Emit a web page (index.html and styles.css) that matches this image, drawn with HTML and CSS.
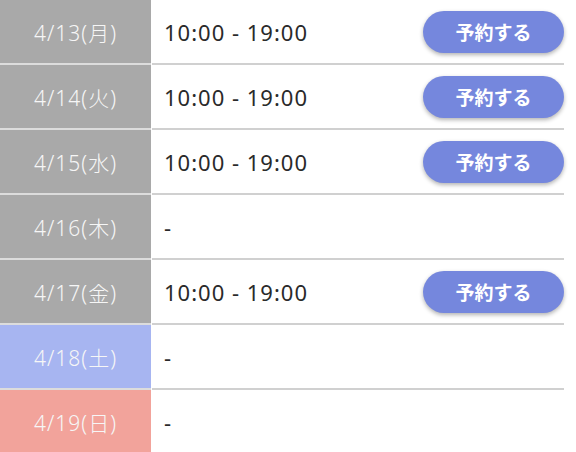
FILE: index.html
```html
<!DOCTYPE html>
<html lang="ja">
<head>
<meta charset="utf-8">
<link rel="stylesheet" href="styles.css">
</head>
<body>
<div class="schedule">
  <div class="row">
    <div class="date weekday">4/13(月)</div>
    <div class="slot"><span class="time">10:00 - 19:00</span><button class="reserve">予約する</button></div>
  </div>
  <div class="row">
    <div class="date weekday">4/14(火)</div>
    <div class="slot"><span class="time">10:00 - 19:00</span><button class="reserve">予約する</button></div>
  </div>
  <div class="row">
    <div class="date weekday">4/15(水)</div>
    <div class="slot"><span class="time">10:00 - 19:00</span><button class="reserve">予約する</button></div>
  </div>
  <div class="row">
    <div class="date weekday">4/16(木)</div>
    <div class="slot"><span class="time">-</span></div>
  </div>
  <div class="row">
    <div class="date weekday">4/17(金)</div>
    <div class="slot"><span class="time">10:00 - 19:00</span><button class="reserve">予約する</button></div>
  </div>
  <div class="row">
    <div class="date saturday">4/18(土)</div>
    <div class="slot"><span class="time">-</span></div>
  </div>
  <div class="row">
    <div class="date sunday">4/19(日)</div>
    <div class="slot"><span class="time">-</span></div>
  </div>
</div>
</body>
</html>
```

FILE: styles.css
```css
html, body {
  margin: 0;
  padding: 0;
  background: #fff;
  overflow: hidden;
}
body {
  width: 576px;
  height: 452px;
  font-family: "Noto Sans", "Noto Sans CJK JP", sans-serif;
}
.schedule {
  width: 564px;
  display: flex;
  flex-direction: column;
}
.row {
  display: grid;
  grid-template-columns: 151px 1fr;
  column-gap: 1px;
  height: 65px;
}
.date {
  display: flex;
  align-items: center;
  justify-content: center;
  color: #f6f6f6;
  font-size: 21px;
  font-weight: 300;
  letter-spacing: 1px;
  border-bottom: 2px solid #dcdcdc;
}
.weekday { background: #a9a9a9; }
.saturday { background: #a7b5f1; }
.sunday { background: #f2a39b; }
.slot {
  display: flex;
  align-items: center;
  justify-content: space-between;
  padding-left: 12px;
  border-bottom: 2px solid #d0d0d0;
}
.time {
  font-size: 22px;
  letter-spacing: 1px;
  color: #2a2a2a;
}
.reserve {
  width: 141px;
  height: 42px;
  border: none;
  border-radius: 21px;
  background: #7587dd;
  color: #fff;
  font-family: "Noto Sans CJK JP", sans-serif;
  font-size: 19px;
  font-weight: 700;
  box-shadow: 0 2px 4px rgba(0, 0, 0, 0.3);
  padding: 0;
}
```
